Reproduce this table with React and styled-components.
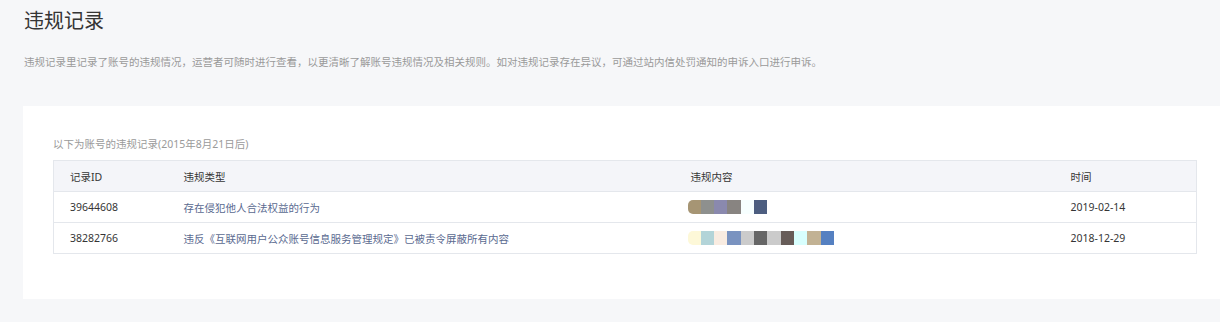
import React from 'react';
import styled, { createGlobalStyle } from 'styled-components';

const GlobalStyle = createGlobalStyle`
  html, body {
    margin: 0;
    padding: 0;
    background: #f6f7f9;
    overflow: hidden;
  }
  body {
    font-family: "Noto Sans", "Noto Sans CJK SC", sans-serif;
    color: #333;
  }
`;

const Page = styled.div`
  padding: 7px 0 24px 0;
`;

const Title = styled.h2`
  margin: 0 0 0 24px;
  font-size: 20px;
  line-height: 28px;
  font-weight: normal;
  color: #353535;
`;

const Desc = styled.p`
  margin: 19px 0 0 24px;
  font-size: 10.5px;
  line-height: 16px;
  color: #9a9a9a;
`;

const Card = styled.div`
  margin: 36px 0 0 23px;
  background: #fff;
  padding: 30px 23px 45px 30px;
`;

const Caption = styled.div`
  font-size: 10.5px;
  line-height: 16px;
  color: #9a9a9a;
  margin-bottom: 8px;
`;

const Table = styled.table`
  width: 100%;
  border-collapse: collapse;
  border: 1px solid #e4e7ec;
  table-layout: fixed;
  font-size: 10.5px;
`;

const Th = styled.th`
  height: 30px;
  padding: 0 0 0 16px;
  text-align: left;
  font-weight: normal;
  color: #353535;
  background: #f4f5f9;
  border-bottom: 1px solid #e4e7ec;
`;

const Td = styled.td`
  height: 30px;
  padding: 0 0 0 16px;
  border-bottom: 1px solid #e4e7ec;
  color: ${props => (props.$link ? '#5a6a90' : '#353535')};
  white-space: nowrap;
`;

const Mosaic = styled.div`
  display: flex;
  margin-left: -3px;
  height: 14px;
`;

const Tile = styled.span`
  width: 13.33px;
  height: 14px;
  background: ${props => props.$color};
  &:first-child {
    border-radius: 5px 0 0 5px;
  }
`;

const records = [
  {
    id: '39644608',
    type: '存在侵犯他人合法权益的行为',
    tiles: ['#a69574', '#8e908e', '#8a89ae', '#888481', '#f7ffff', '#4d5e80'],
    date: '2019-02-14',
  },
  {
    id: '38282766',
    type: '违反《互联网用户公众账号信息服务管理规定》已被责令屏蔽所有内容',
    tiles: [
      '#fdf8d8', '#b3d4d8', '#f9ece1', '#7a93c0', '#cbcbcb', '#666666',
      '#cbcbcb', '#675c58', '#d8fffe', '#c2b294', '#5580c1',
    ],
    date: '2018-12-29',
  },
];

const App = () => (
  <Page>
    <GlobalStyle />
    <Title>违规记录</Title>
    <Desc>
      违规记录里记录了账号的违规情况，运营者可随时进行查看，以更清晰了解账号违规情况及相关规则。如对违规记录存在异议，可通过站内信处罚通知的申诉入口进行申诉。
    </Desc>
    <Card>
      <Caption>以下为账号的违规记录(2015年8月21日后)</Caption>
      <Table>
        <colgroup>
          <col style={{ width: 114 }} />
          <col style={{ width: 507 }} />
          <col style={{ width: 380 }} />
          <col />
        </colgroup>
        <thead>
          <tr>
            <Th>记录ID</Th>
            <Th>违规类型</Th>
            <Th>违规内容</Th>
            <Th>时间</Th>
          </tr>
        </thead>
        <tbody>
          {records.map(r => (
            <tr key={r.id}>
              <Td>{r.id}</Td>
              <Td $link>{r.type}</Td>
              <Td>
                <Mosaic>
                  {r.tiles.map((c, i) => (
                    <Tile key={i} $color={c} />
                  ))}
                </Mosaic>
              </Td>
              <Td>{r.date}</Td>
            </tr>
          ))}
        </tbody>
      </Table>
    </Card>
  </Page>
);

export default App;
